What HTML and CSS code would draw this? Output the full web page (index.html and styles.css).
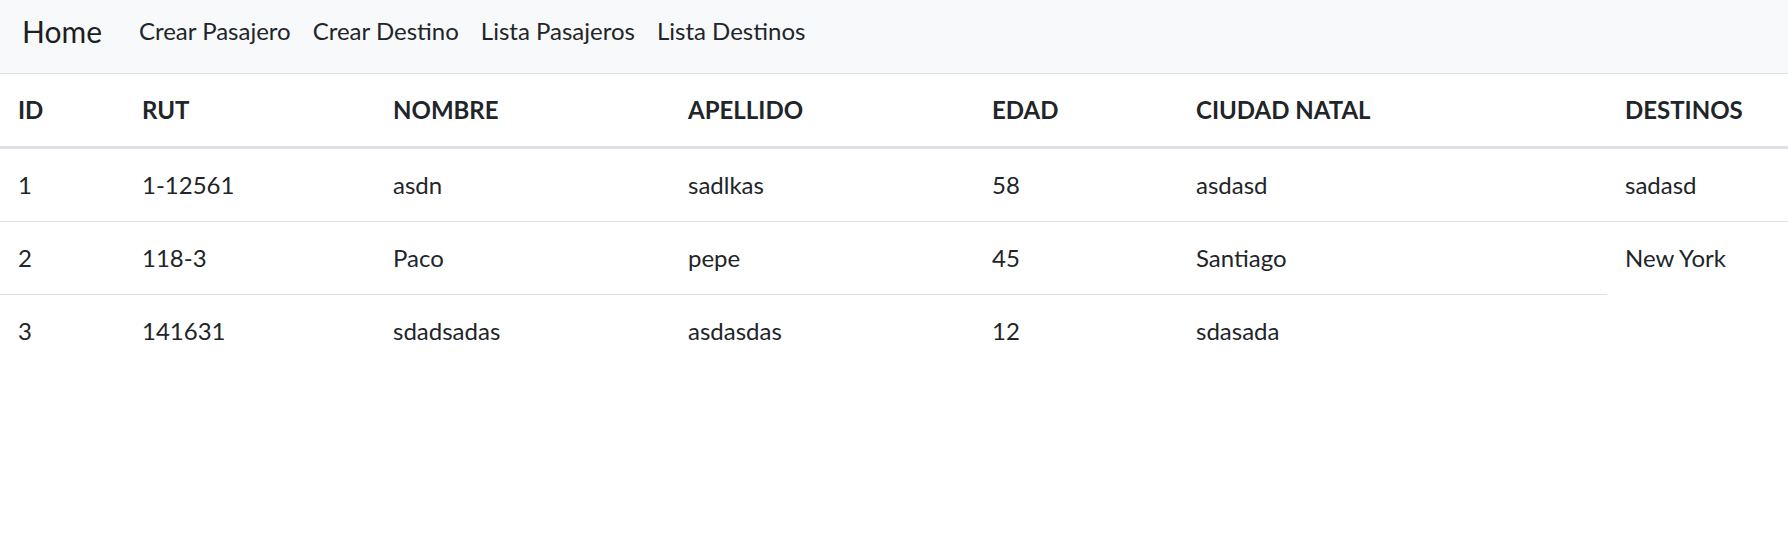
FILE: index.html
```html
<!DOCTYPE html>
<html lang="es">
<head>
<meta charset="utf-8">
<title>Pasajeros</title>
<link rel="stylesheet" href="styles.css">
</head>
<body>
<nav class="navbar">
  <a class="brand" href="#">Home</a>
  <ul class="nav">
    <li><a class="nav-link" href="#">Crear Pasajero</a></li>
    <li><a class="nav-link" href="#">Crear Destino</a></li>
    <li><a class="nav-link" href="#">Lista Pasajeros</a></li>
    <li><a class="nav-link" href="#">Lista Destinos</a></li>
  </ul>
</nav>
<table class="table">
  <colgroup>
    <col class="c-id">
    <col class="c-rut">
    <col class="c-nombre">
    <col class="c-apellido">
    <col class="c-edad">
    <col class="c-ciudad">
    <col class="c-destinos">
  </colgroup>
  <thead>
    <tr>
      <th>ID</th>
      <th>RUT</th>
      <th>NOMBRE</th>
      <th>APELLIDO</th>
      <th>EDAD</th>
      <th>CIUDAD NATAL</th>
      <th>DESTINOS</th>
    </tr>
  </thead>
  <tbody>
    <tr>
      <td>1</td>
      <td>1-12561</td>
      <td>asdn</td>
      <td>sadlkas</td>
      <td>58</td>
      <td>asdasd</td>
      <td>sadasd</td>
    </tr>
    <tr>
      <td>2</td>
      <td>118-3</td>
      <td>Paco</td>
      <td>pepe</td>
      <td>45</td>
      <td>Santiago</td>
      <td>New York</td>
    </tr>
    <tr>
      <td>3</td>
      <td>141631</td>
      <td>sdadsadas</td>
      <td>asdasdas</td>
      <td>12</td>
      <td>sdasada</td>
    </tr>
  </tbody>
</table>
</body>
</html>
```
FILE: styles.css
```css
html, body {
  margin: 0;
  padding: 0;
}

body {
  font-family: "Lato", "Segoe UI", "Open Sans", sans-serif;
  font-size: 24px;
  line-height: 1.5;
  color: #212529;
  background: #ffffff;
}

a {
  text-decoration: none;
}

.navbar {
  display: flex;
  align-items: flex-start;
  height: 73px;
  box-sizing: border-box;
  padding: 9px 24px 0 22px;
  background: #f8f9fa;
}

.brand {
  font-size: 30px;
  line-height: 45px;
  color: rgba(0, 0, 0, 0.9);
  margin-right: 26px;
}

.nav {
  display: flex;
  list-style: none;
  margin: 4px 0 0 0;
  padding: 0;
}

.nav-link {
  display: block;
  padding: 0 11px;
  line-height: 36px;
  color: #212529;
}

.table {
  width: 100%;
  border-collapse: collapse;
  table-layout: fixed;
}

.c-id { width: 124px; }
.c-rut { width: 251px; }
.c-nombre { width: 295px; }
.c-apellido { width: 304px; }
.c-edad { width: 204px; }
.c-ciudad { width: 429px; }
.c-destinos { width: 181px; }

.table th,
.table td {
  padding: 18px;
  line-height: 36px;
  text-align: left;
  vertical-align: top;
  border-top: 1px solid #dee2e6;
}

.table th {
  font-weight: 700;
  border-bottom: 3px solid #dee2e6;
}
```
